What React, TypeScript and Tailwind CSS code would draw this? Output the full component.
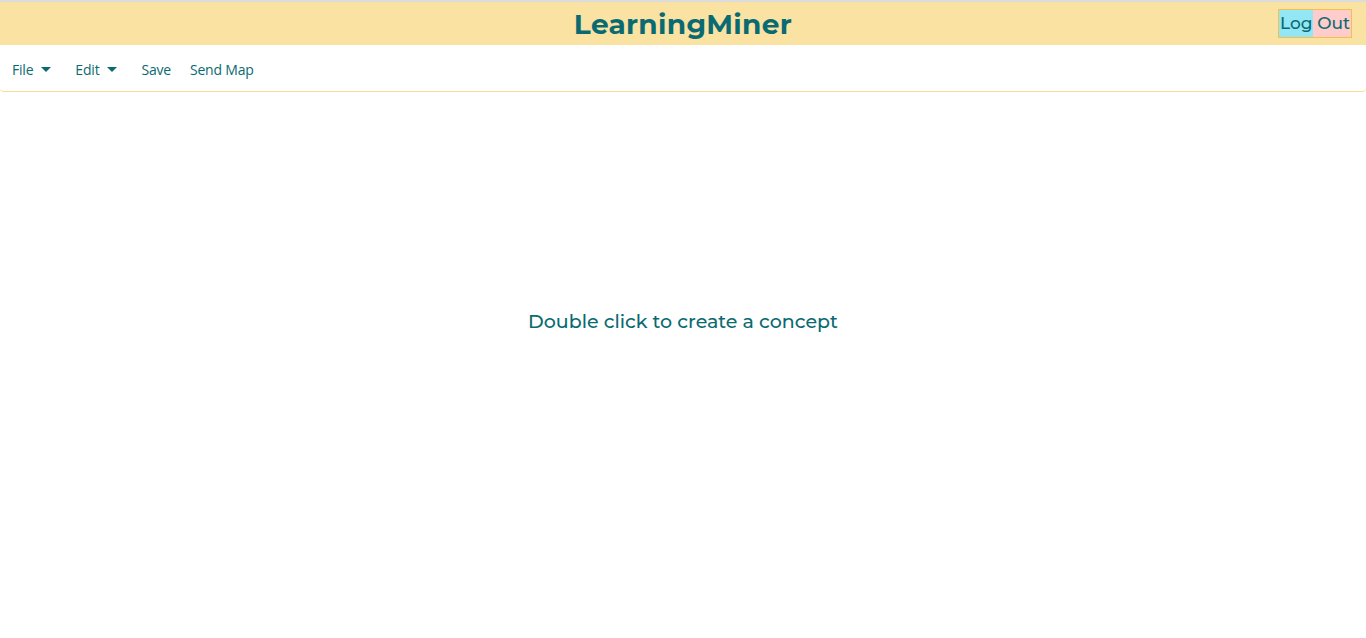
import React from "react";

const menuItems = [
  { label: "File", dropdown: true },
  { label: "Edit", dropdown: true },
  { label: "Save", dropdown: false },
  { label: "Send Map", dropdown: false },
];

const Caret: React.FC = () => (
  <svg width="10" height="6" viewBox="0 0 10 6" className="ml-[8px] mt-[1px]">
    <path d="M0 0 L10 0 L5 5 Z" fill="currentColor" />
  </svg>
);

export default function App() {
  return (
    <div className="min-h-[638px] bg-white font-['Open_Sans',sans-serif] text-[#0a6a72]">
      <div className="h-[2px] bg-[#dcdcdc]" />
      <header className="relative flex h-[43px] items-center justify-center bg-[#fae2a2]">
        <h1 className="font-['Montserrat','Open_Sans',sans-serif] text-[28px] font-bold tracking-[0.3px] text-[#0a6a72]">
          LearningMiner
        </h1>
        <button className="absolute right-[14px] top-[7px] flex h-[29px] items-center border border-[#f2c04c] bg-[linear-gradient(to_right,#93e7f5_0%,#93e7f5_47%,#ffcccc_47%,#ffcccc_100%)] bg-clip-padding px-[1px] font-['Montserrat','Open_Sans',sans-serif] text-[17px] font-medium text-[#0a6a72]">
          Log Out
        </button>
      </header>
      <nav className="flex h-[47px] items-center rounded-b-[4px] border-b border-[#f6dc96] bg-white pl-[12px] pt-[2px] text-[14px] tracking-[-0.2px]">
        {menuItems.map((item) => (
          <div
            key={item.label}
            className={`flex items-center ${item.dropdown ? "mr-[24px]" : "mr-[19px]"}`}
          >
            <span>{item.label}</span>
            {item.dropdown && <Caret />}
          </div>
        ))}
      </nav>
      <main className="flex h-[460px] items-center justify-center">
        <p className="font-['Montserrat','Open_Sans',sans-serif] text-[19px] font-medium text-[#0a6a72]">
          Double click to create a concept
        </p>
      </main>
    </div>
  );
}
